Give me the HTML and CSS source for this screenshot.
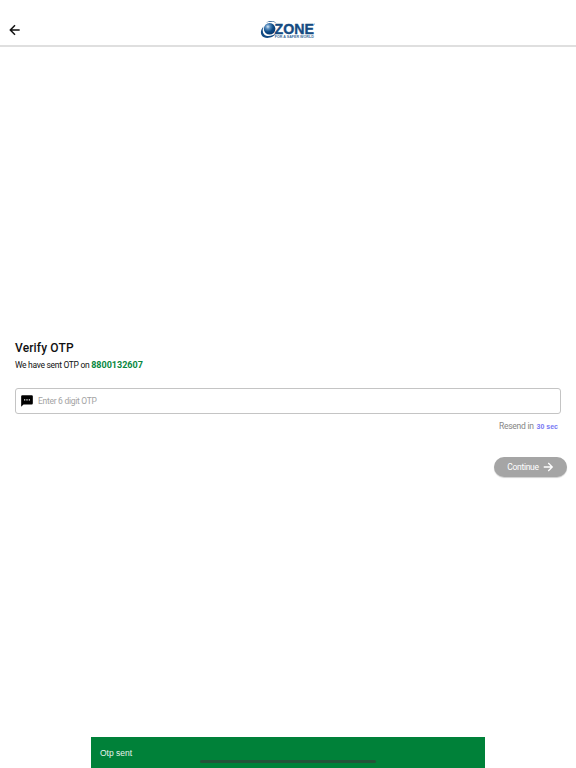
FILE: index.html
```html
<!DOCTYPE html>
<html lang="en">
<head>
    <meta charset="UTF-8">
    <meta name="viewport" content="width=device-width, initial-scale=1.0">
    <title>Verify OTP</title>
    <link rel="stylesheet" href="styles.css">
</head>
<body>
    <header class="header">
        <button class="back-btn" aria-label="Back">
            <svg width="14" height="14" viewBox="0 0 24 24"><path d="M20 12H4.5M12 4l-8 8 8 8" fill="none" stroke="#111" stroke-width="2.6"/></svg>
        </button>
        <svg class="logo" width="56" height="20" viewBox="0 0 56 20">
            <defs>
                <radialGradient id="globe" cx="0.35" cy="0.32" r="0.75">
                    <stop offset="0" stop-color="#d8e8f5"/>
                    <stop offset="0.25" stop-color="#5b8fc0"/>
                    <stop offset="0.6" stop-color="#0c4a86"/>
                    <stop offset="1" stop-color="#06366c"/>
                </radialGradient>
            </defs>
            <circle cx="9.6" cy="8.8" r="5.8" fill="url(#globe)"/>
            <path d="M3.5 6.5C0 10 0 15.5 4 17.3C8 19.2 14 17 16 13.3C12 16.4 7 17 4.2 14.4C2.2 12.3 2.5 9 3.5 6.5Z" fill="#124a83"/>
            <path d="M6 2.6C9 .3 14 .2 16.5 3.2C13.5 1.6 9.5 1.5 6 2.6Z" fill="#124a83"/>
            <text class="logo-name" x="14.6" y="14.4" textLength="39.4" lengthAdjust="spacingAndGlyphs">ZONE</text>
            <text class="logo-tag" x="14.8" y="18.4" textLength="39" lengthAdjust="spacingAndGlyphs">FOR A SAFER WORLD</text>
            <circle cx="54.4" cy="4" r="0.5" fill="#5f87ae"/>
        </svg>
    </header>

    <main class="container">
        <h1>Verify OTP</h1>
        <p class="sent-text">We have sent OTP on <span class="phone">8800132607</span></p>

        <div class="otp-field">
            <svg width="14" height="14" viewBox="0 0 24 24"><path d="M4 2h16a2 2 0 0 1 2 2v12a2 2 0 0 1-2 2H6l-4 4V4a2 2 0 0 1 2-2z" fill="#000"/><path d="M7 9h2v2H7zM11 9h2v2h-2zM15 9h2v2h-2z" fill="#fff"/></svg>
            <input type="text" class="otp-input" maxlength="6" placeholder="Enter 6 digit OTP">
        </div>

        <div class="resend">Resend in <span class="timer">30 sec</span></div>

        <button class="continue-btn">
            Continue
            <svg width="12" height="12" viewBox="0 0 24 24"><path d="M3.5 12H20M12.5 4l8 8-8 8" fill="none" stroke="#fff" stroke-width="2.6"/></svg>
        </button>
    </main>

    <div class="toast">Otp sent<span class="home-bar"></span></div>
</body>
</html>
```

FILE: styles.css
```css
* {
    box-sizing: border-box;
}
body {
    margin: 0;
    height: 768px;
    display: flex;
    flex-direction: column;
    overflow: hidden;
    background: #fff;
    color: #111;
    font-family: Roboto, "Liberation Sans", sans-serif;
}
button {
    border: none;
    cursor: pointer;
    font-family: inherit;
}
.header {
    height: 47px;
    flex-shrink: 0;
    padding: 20px 8px 0;
    border-bottom: 2px solid #dfdfdf;
    display: grid;
    grid-template-columns: 1fr auto 1fr;
    align-items: start;
}
.back-btn {
    width: 14px;
    height: 14px;
    margin-top: 3px;
    padding: 0;
    background: none;
}
.back-btn svg,
.logo {
    display: block;
}
.logo-name {
    font: bold 14.5px "Liberation Sans", Arial, sans-serif;
    fill: #154b82;
    stroke: #154b82;
    stroke-width: 0.4px;
}
.logo-tag {
    font: bold 2.8px "Liberation Sans", Arial, sans-serif;
    fill: #3d6c9b;
}
.container {
    flex: 1;
    padding: 293px 15px 0;
    display: flex;
    flex-direction: column;
}
h1 {
    margin: 0;
    font-size: 12px;
    line-height: 17px;
    font-weight: 500;
    letter-spacing: 0.15px;
}
.sent-text {
    margin: 1px 0 0;
    font-size: 8.5px;
    line-height: 14px;
    letter-spacing: -0.31px;
}
.phone {
    color: #07883e;
    font-size: 9px;
    font-weight: bold;
    letter-spacing: 0;
}
.otp-field {
    height: 26px;
    margin-top: 16px;
    padding: 0 5px;
    border: 1px solid #c4c4c4;
    border-radius: 3px;
    display: flex;
    align-items: center;
    gap: 4px;
}
.otp-field svg {
    margin-left: -1px;
}
.otp-input {
    flex: 1;
    padding: 0;
    border: none;
    outline: none;
    background: none;
    font: 8.5px Roboto, sans-serif;
    letter-spacing: -0.28px;
}
.otp-input::placeholder {
    color: #a3a3a3;
}
.resend {
    margin: 5px 3px 0 0;
    align-self: flex-end;
    color: #858585;
    font-size: 8.5px;
    line-height: 14px;
    letter-spacing: -0.25px;
}
.timer {
    margin-left: 1px;
    color: #7777f5;
    font: bold 7px "Liberation Sans", Arial, sans-serif;
    letter-spacing: 0;
}
.continue-btn {
    width: 73px;
    height: 20px;
    margin: 24px -6px 0 0;
    padding: 0;
    align-self: flex-end;
    display: flex;
    align-items: center;
    justify-content: center;
    gap: 3px;
    border-radius: 10px;
    background: #a5a5a5;
    box-shadow: 0 1px 1px #d0d0d0;
    color: #fff;
    font-size: 8.5px;
    letter-spacing: -0.3px;
}
.toast {
    position: relative;
    width: 394px;
    height: 31px;
    align-self: center;
    flex-shrink: 0;
    padding: 0 9px;
    background: #008139;
    color: #e7f4ec;
    font: 8.5px/32px "Liberation Sans", Arial, sans-serif;
}
/* system home indicator, drawn over the toast */
.home-bar {
    position: absolute;
    left: 109px;
    bottom: 5px;
    width: 176px;
    height: 3px;
    border-radius: 2px;
    background: #24553a;
}
```
